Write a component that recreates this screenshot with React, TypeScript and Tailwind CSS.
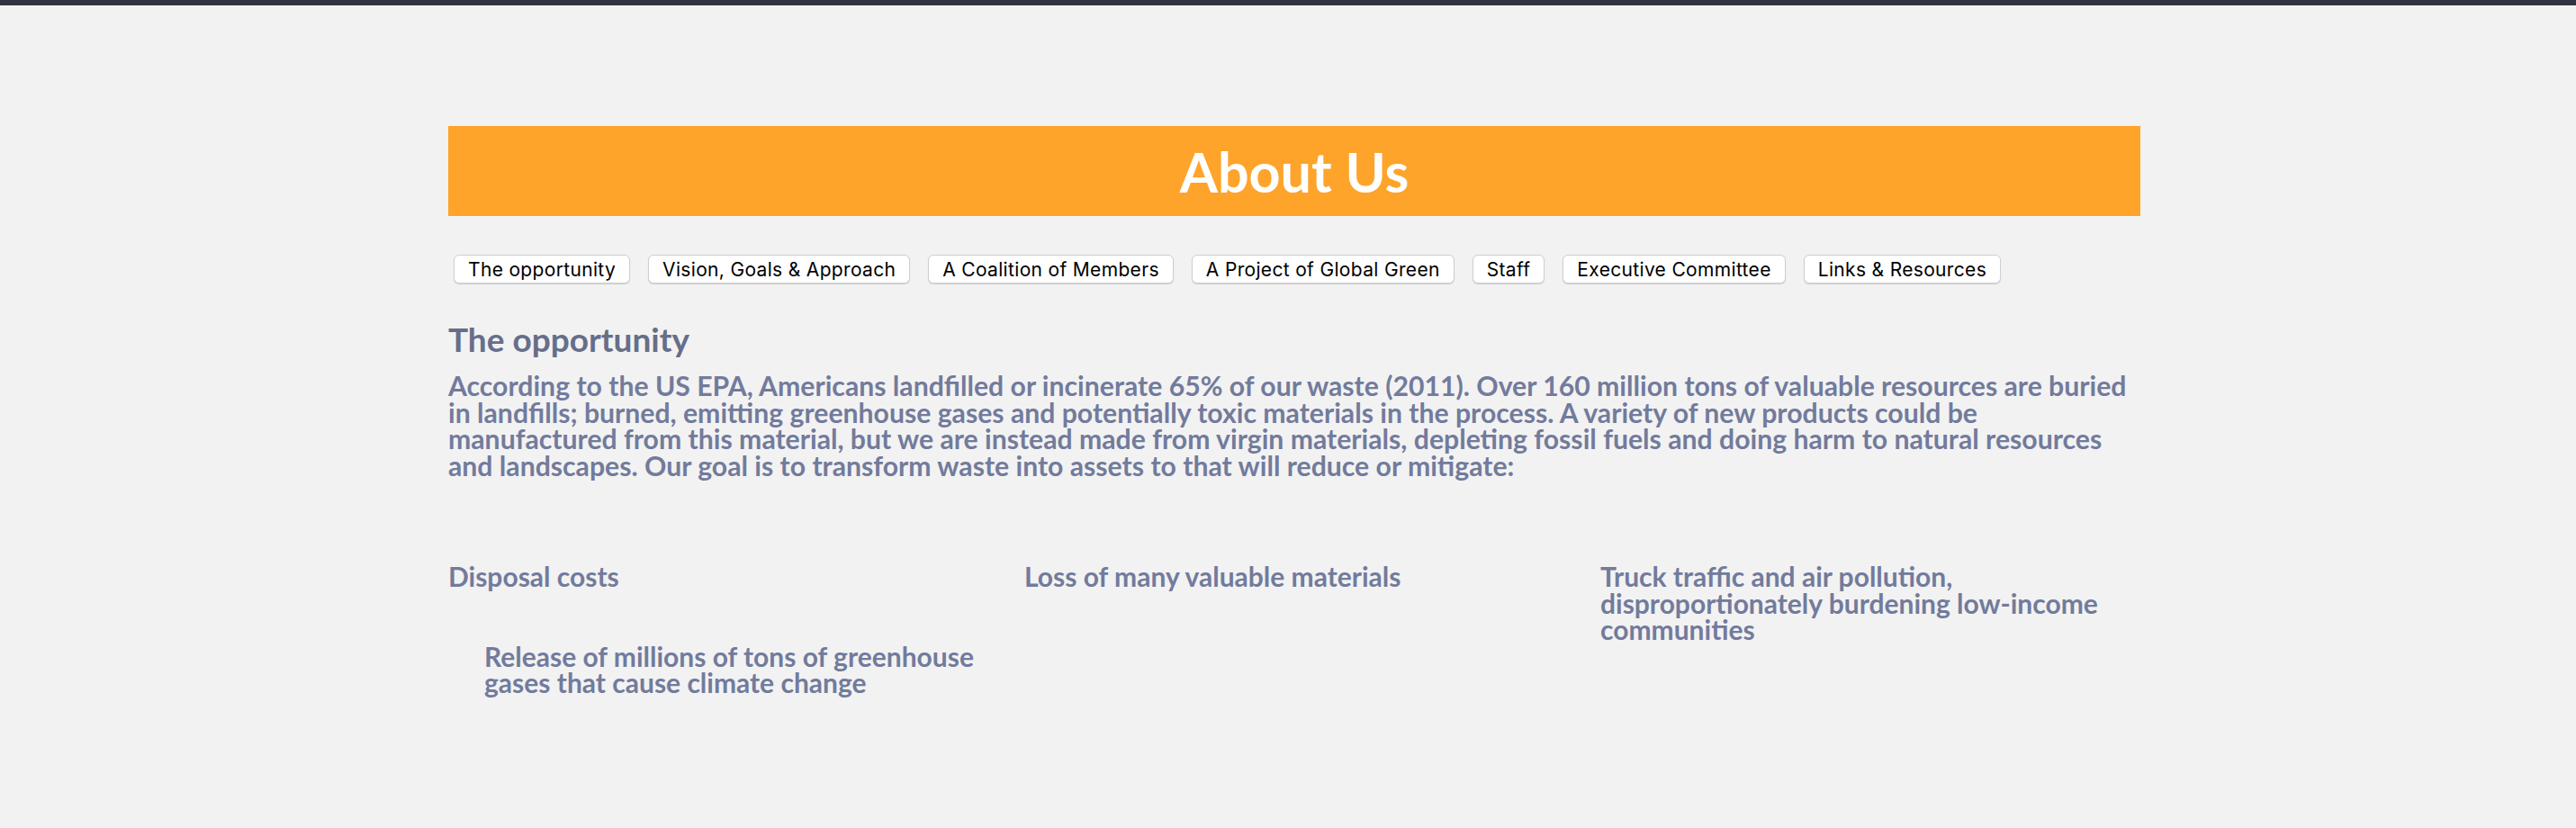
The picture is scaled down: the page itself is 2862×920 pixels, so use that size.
import React from "react";

const tabs = [
  "The opportunity",
  "Vision, Goals & Approach",
  "A Coalition of Members",
  "A Project of Global Green",
  "Staff",
  "Executive Committee",
  "Links & Resources",
];

export default function App() {
  return (
    <div className="min-h-[920px] bg-[#f2f2f2] font-['Lato',sans-serif]">
      <div className="h-[6px] bg-[#2e3440]" />
      <div className="ml-[498px] w-[1880px] pt-[134px]">
        <div className="flex h-[100px] items-center justify-center bg-[#fea42b]">
          <h1 className="text-[61px] font-bold leading-none text-white">About Us</h1>
        </div>
        <div className="mt-[43px] flex gap-[20px] pl-[6px]">
          {tabs.map((t) => (
            <button
              key={t}
              className="h-[32px] rounded-[6px] border border-[#cfcfcf] bg-white px-[15px] font-['Inter',sans-serif] text-[21px] leading-none tracking-[0.33px] text-black shadow-[0_1px_1px_rgba(0,0,0,0.15)]"
            >
              {t}
            </button>
          ))}
        </div>
        <h2 className="mt-[40px] text-[37px] font-bold leading-[43px] text-[#666e8a]">The opportunity</h2>
        <p className="mt-[16px] text-[30.2px] font-bold leading-[29.5px] text-[#727b9c]">
          According to the US EPA, Americans landfilled or incinerate 65% of our waste (2011). Over 160 million tons of valuable resources are buried in landfills; burned, emitting greenhouse gases and potentially toxic materials in the process. A variety of new products could be manufactured from this material, but we are instead made from virgin materials, depleting fossil fuels and doing harm to natural resources and landscapes. Our goal is to transform waste into assets to that will reduce or mitigate:
        </p>
        <ul className="mt-[94px] grid grid-cols-3 gap-x-[40px] text-[30px] font-bold leading-[29.5px] text-[#727b9c]">
          <li>Disposal costs</li>
          <li>Loss of many valuable materials</li>
          <li>Truck traffic and air pollution, disproportionately burdening low-income communities</li>
          <li className="pl-[40px]">Release of millions of tons of greenhouse gases that cause climate change</li>
        </ul>
      </div>
    </div>
  );
}
